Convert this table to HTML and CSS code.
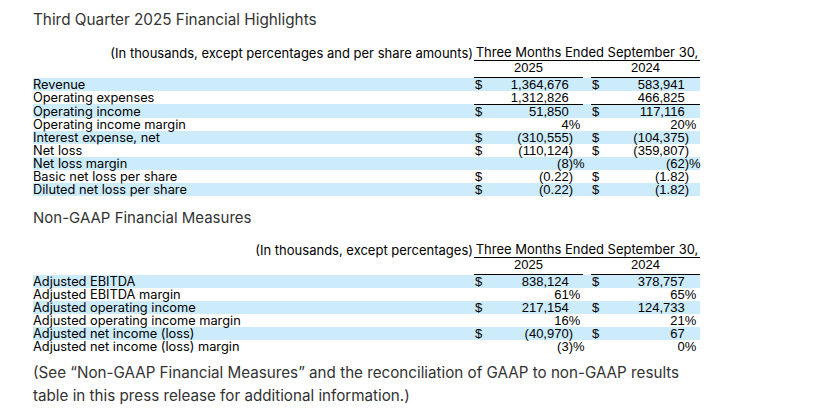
FILE: index.html
```html
<!DOCTYPE html>
<html lang="en">
<head>
<meta charset="utf-8">
<title>Third Quarter 2025 Financial Highlights</title>
<link rel="stylesheet" href="styles.css">
</head>
<body>
<main class="page">
  <h2 class="title">Third Quarter 2025 Financial Highlights</h2>
  <table class="fin">
    <colgroup>
      <col class="c-label"><col class="c-cur"><col class="c-num"><col class="c-pct"><col class="c-gap"><col class="c-cur"><col class="c-num2"><col class="c-end">
    </colgroup>
    <thead>
      <tr class="h1">
        <th class="hl">(In thousands, except percentages and per share amounts)</th>
        <th class="period" colspan="7">Three Months Ended September 30,</th>
      </tr>
      <tr class="h2">
        <th></th>
        <th class="yr" colspan="3">2025</th>
        <th></th>
        <th class="yr" colspan="3">2024</th>
      </tr>
    </thead>
    <tbody>
      <tr class="hi"><td class="lb">Revenue</td><td class="cur">$</td><td class="num pos">1,364,676</td><td></td><td></td><td class="cur">$</td><td class="num pos">583,941</td><td></td></tr>
      <tr><td class="lb">Operating expenses</td><td></td><td class="num pos">1,312,826</td><td></td><td></td><td></td><td class="num pos">466,825</td><td></td></tr>
      <tr class="hi total"><td class="lb">Operating income</td><td class="cur">$</td><td class="num pos">51,850</td><td></td><td></td><td class="cur">$</td><td class="num pos">117,116</td><td></td></tr>
      <tr><td class="lb">Operating income margin</td><td></td><td class="num pos">4<span class="pc">%</span></td><td></td><td></td><td></td><td class="num pos">20<span class="pc">%</span></td><td></td></tr>
      <tr class="hi"><td class="lb">Interest expense, net</td><td class="cur">$</td><td class="num">(310,555)</td><td></td><td></td><td class="cur">$</td><td class="num">(104,375)</td><td></td></tr>
      <tr><td class="lb">Net loss</td><td class="cur">$</td><td class="num">(110,124)</td><td></td><td></td><td class="cur">$</td><td class="num">(359,807)</td><td></td></tr>
      <tr class="hi"><td class="lb">Net loss margin</td><td></td><td class="num">(8)<span class="pc">%</span></td><td></td><td></td><td></td><td class="num">(62)<span class="pc">%</span></td><td></td></tr>
      <tr><td class="lb">Basic net loss per share</td><td class="cur">$</td><td class="num">(0.22)</td><td></td><td></td><td class="cur">$</td><td class="num">(1.82)</td><td></td></tr>
      <tr class="hi"><td class="lb">Diluted net loss per share</td><td class="cur">$</td><td class="num">(0.22)</td><td></td><td></td><td class="cur">$</td><td class="num">(1.82)</td><td></td></tr>
    </tbody>
  </table>

  <h3 class="subtitle">Non-GAAP Financial Measures</h3>
  <table class="fin fin2">
    <colgroup>
      <col class="c-label"><col class="c-cur"><col class="c-num"><col class="c-pct"><col class="c-gap"><col class="c-cur"><col class="c-num2"><col class="c-end">
    </colgroup>
    <thead>
      <tr class="h1">
        <th class="hl">(In thousands, except percentages)</th>
        <th class="period" colspan="7">Three Months Ended September 30,</th>
      </tr>
      <tr class="h2">
        <th></th>
        <th class="yr" colspan="3">2025</th>
        <th></th>
        <th class="yr" colspan="3">2024</th>
      </tr>
    </thead>
    <tbody>
      <tr class="hi"><td class="lb">Adjusted EBITDA</td><td class="cur">$</td><td class="num pos">838,124</td><td></td><td></td><td class="cur">$</td><td class="num pos">378,757</td><td></td></tr>
      <tr><td class="lb">Adjusted EBITDA margin</td><td></td><td class="num pos">61<span class="pc">%</span></td><td></td><td></td><td></td><td class="num pos">65<span class="pc">%</span></td><td></td></tr>
      <tr class="hi"><td class="lb">Adjusted operating income</td><td class="cur">$</td><td class="num pos">217,154</td><td></td><td></td><td class="cur">$</td><td class="num pos">124,733</td><td></td></tr>
      <tr><td class="lb">Adjusted operating income margin</td><td></td><td class="num pos">16<span class="pc">%</span></td><td></td><td></td><td></td><td class="num pos">21<span class="pc">%</span></td><td></td></tr>
      <tr class="hi"><td class="lb">Adjusted net income (loss)</td><td class="cur">$</td><td class="num">(40,970)</td><td></td><td></td><td class="cur">$</td><td class="num pos">67</td><td></td></tr>
      <tr><td class="lb">Adjusted net income (loss) margin</td><td></td><td class="num">(3)<span class="pc">%</span></td><td></td><td></td><td></td><td class="num pos">0<span class="pc">%</span></td><td></td></tr>
    </tbody>
  </table>

  <p class="note">(See “Non-GAAP Financial Measures” and the reconciliation of GAAP to non-GAAP results table in this press release for additional information.)</p>
</main>
</body>
</html>
```

FILE: styles.css
```css
body {
  margin: 0;
  background: #ffffff;
  font-family: Inter, "Noto Sans", "Liberation Sans", sans-serif;
  color: #000;
}

.page {
  width: 667px;
  padding: 10px 0 0 33px;
}

.title {
  margin: 0;
  font-size: 15.3px;
  line-height: 20px;
  font-weight: 400;
  color: #333333;
}

.subtitle {
  margin: 12px 0 0;
  font-size: 15px;
  line-height: 20px;
  font-weight: 400;
  color: #333333;
}

.fin {
  width: 667px;
  table-layout: fixed;
  border-collapse: separate;
  border-spacing: 0;
  margin-top: 15px;
  font-size: 12.8px;
  line-height: 13px;
  color: #000;
}

.fin2 {
  margin-top: 14px;
}

.c-label { width: 441px; }
.c-cur { width: 14px; }
.c-num { width: 85px; }
.c-pct { width: 10px; }
.c-gap { width: 8px; }
.c-num2 { width: 84px; }
.c-end { width: 11px; }

.fin th,
.fin td {
  padding: 0;
  font-weight: 400;
  vertical-align: bottom;
  white-space: nowrap;
}

.fin .h1 th {
  font-size: 13px;
  line-height: 15px;
}

.fin .hl {
  text-align: right;
  padding-right: 1px;
}

.fin .period {
  text-align: center;
  border-bottom: 1px solid #000;
}

.fin .h2 th {
  vertical-align: top;
  height: 16px;
}

.fin .yr,
.fin .cur,
.fin .num {
  font-family: "Liberation Sans", Arial, sans-serif;
  font-size: 13px;
}

.fin .yr {
  text-align: center;
  border-bottom: 1px solid #000;
}

.fin .hi {
  background: #ccebfb;
}

.fin .lb {
  text-align: left;
}

.fin .cur {
  text-align: left;
  padding-left: 1px;
}

.fin .num {
  text-align: right;
}

.fin .num.pos {
  padding-right: 4.3px;
}

.fin .pc {
  display: inline-block;
  width: 0;
}

.fin .total td:nth-child(2),
.fin .total td:nth-child(3),
.fin .total td:nth-child(4),
.fin .total td:nth-child(6),
.fin .total td:nth-child(7),
.fin .total td:nth-child(8) {
  border-top: 1px solid #000;
}

.note {
  margin: 8px 0 0;
  font-size: 15.2px;
  line-height: 23px;
  color: #333333;
}
```
